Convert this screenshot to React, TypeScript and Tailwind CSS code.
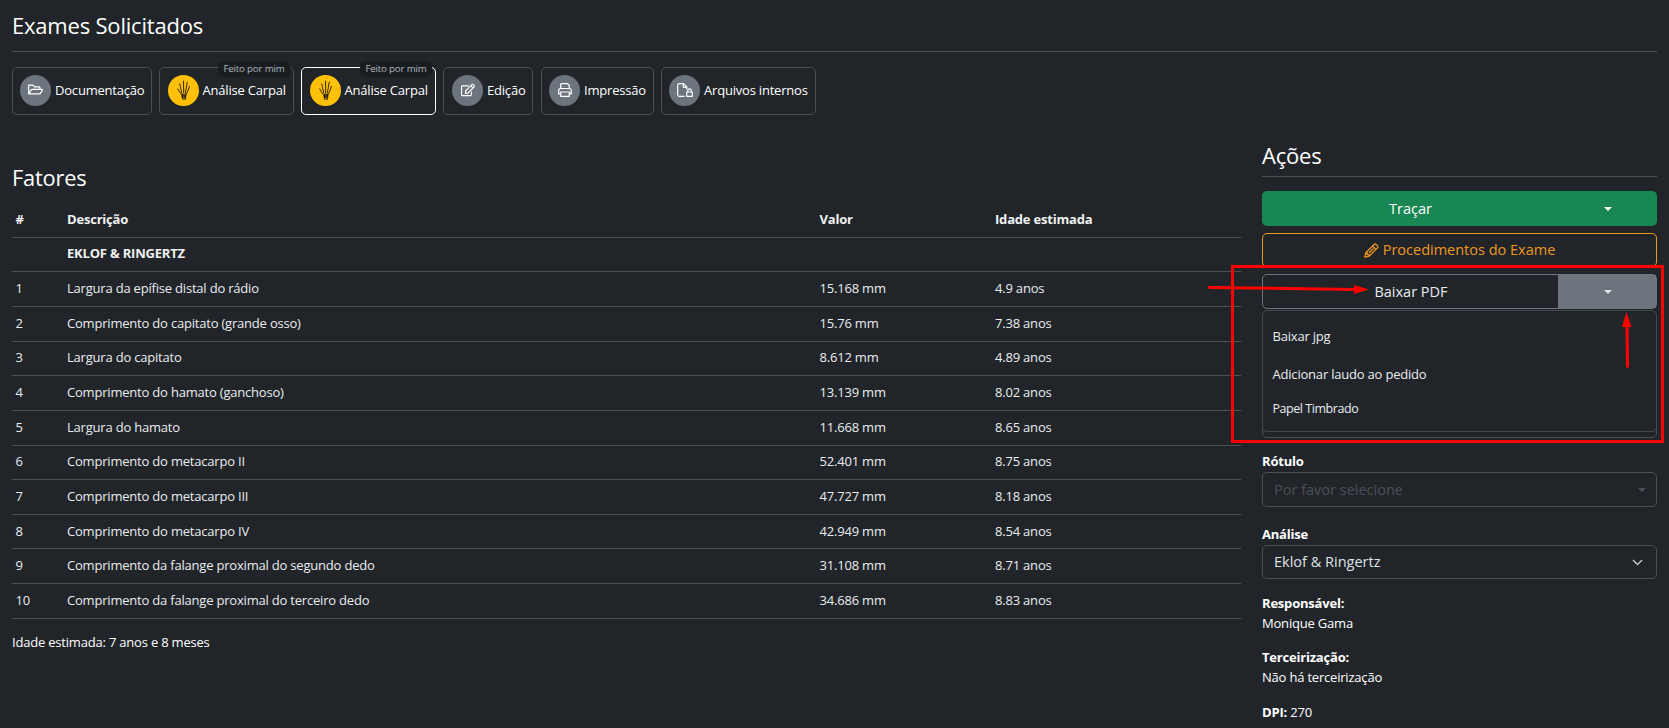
import { FC, ReactNode } from "react";
import { FaRegFolderOpen, FaRegEdit } from "react-icons/fa";
import { BsChevronDown } from "react-icons/bs";

const fatores = [
  ["1", "Largura da epífise distal do rádio", "15.168 mm", "4.9 anos"],
  ["2", "Comprimento do capitato (grande osso)", "15.76 mm", "7.38 anos"],
  ["3", "Largura do capitato", "8.612 mm", "4.89 anos"],
  ["4", "Comprimento do hamato (ganchoso)", "13.139 mm", "8.02 anos"],
  ["5", "Largura do hamato", "11.668 mm", "8.65 anos"],
  ["6", "Comprimento do metacarpo II", "52.401 mm", "8.75 anos"],
  ["7", "Comprimento do metacarpo III", "47.727 mm", "8.18 anos"],
  ["8", "Comprimento do metacarpo IV", "42.949 mm", "8.54 anos"],
  ["9", "Comprimento da falange proximal do segundo dedo", "31.108 mm", "8.71 anos"],
  ["10", "Comprimento da falange proximal do terceiro dedo", "34.686 mm", "8.83 anos"],
];

const HandBones: FC = () => (
  <svg className="-mt-[2px]" width="13" height="20" viewBox="0 0 13 20" fill="none" stroke="#1d1708" strokeWidth="0.9">
    <path d="M.6 8.500 2 11l2.200 3.400M2.600 3.500l1 4.200L5 13.600M6.500.8l.1 6.200.1 6.500M10.300 1.800 9.300 7.500 8.200 13.600M12.500 6l-1.300 4-1.900 4.200" />
    <path d="M4.400 15h5M4.600 17h4.600" strokeWidth="1.800" strokeDasharray="1.500 .3" />
    <path d="M5.200 19h1.400M7.400 19h1.600" strokeWidth="1.600" />
  </svg>
);

const PrinterIcon: FC = () => (
  <svg className="-mt-px" width="14" height="14" viewBox="0 0 14 14" fill="none" stroke="currentColor" strokeWidth="1.200" strokeLinejoin="round">
    <path d="M2.700 5.500V1.700q0-1 1-1h5.800l1.800 1.800v3M2.700 10.800h-2V7.500q0-2 2-2h8.600q2 0 2 2v3.300h-2" />
    <path d="M2.700 9h8.600v4.300H2.700z" />
  </svg>
);

const FileLockIcon: FC = () => (
  <svg className="-mt-px" width="16" height="14" viewBox="0 0 16 14" fill="none" stroke="currentColor" strokeWidth="1.200" strokeLinejoin="round">
    <path d="M7.500 13.300H2.200q-1.500 0-1.500-1.500V2.200Q.7.700 2.200.7h4.300L9.800 4v2.500M6.300.9v3.400h3.400" />
    <path d="M10.800 9V7.500a1.700 1.700 0 0 1 3.400 0V9M9.700 9h5.600v4.300H9.700z" />
  </svg>
);

const PencilIcon: FC = () => (
  <svg width="15" height="15" viewBox="0 0 15 15" fill="none" stroke="currentColor" strokeWidth="1.300" strokeLinejoin="round">
    <path d="m.8 14.200 1-4.400 8.300-8.300q1-1 2 0l1.400 1.400q1 1 0 2L5.200 13.200zM8.600 3l3.400 3.400M1.800 9.800l1.500.3v1.600h1.600l.3 1.500M5 10l4.500-4.500" />
  </svg>
);

const Caret: FC<{ className?: string }> = ({ className = "" }) => (
  <span className={`inline-block border-x-4 border-t-4 border-x-transparent ${className}`} />
);

type ExameProps = {
  icon: ReactNode;
  label: string;
  className: string;
  carpal?: boolean;
  active?: boolean;
};

const Exame: FC<ExameProps> = ({ icon, label, className, carpal, active }) => (
  <button className={`relative flex h-12 items-center gap-1 rounded-[5px] border pb-px whitespace-nowrap ${className} ${active ? "border-white" : "border-[#495057]"}`}>
    {carpal && (
      <span className="absolute -top-[7px] right-[3px] flex h-4 w-[72px] items-center justify-center rounded-[5px] bg-[#1a1d20] text-[9.75px] text-[#adb5bd]">
        Feito por mim
      </span>
    )}
    <span className={`flex size-[31px] shrink-0 items-center justify-center rounded-full ${carpal ? "bg-[#ffc107]" : "bg-[#6c757d]"}`}>{icon}</span>
    <span>{label}</span>
  </button>
);

const App: FC = () => {
  return (
    <div className="relative h-[728px] overflow-hidden bg-[#212529] px-3 font-['Open_Sans',sans-serif] text-[13px] tracking-[-0.2px] text-white">
      <h1 className="flex h-[52px] items-center border-b border-[#4d5154] text-[22px]">Exames Solicitados</h1>
      <div className="mt-[15px] flex gap-[7px]">
        <Exame className="w-[140px] pl-[7px]" label="Documentação" icon={<FaRegFolderOpen size={15} className="-mt-[2px]" />} />
        <Exame className="w-[135px] pl-[7.500px]" label="Análise Carpal" icon={<HandBones />} carpal />
        <Exame className="w-[135px] pl-[7.500px]" label="Análise Carpal" icon={<HandBones />} carpal active />
        <Exame className="mr-px w-[90px] pl-2" label="Edição" icon={<FaRegEdit size={14} className="-mt-[2px]" />} />
        <Exame className="w-[113px] pl-[7px]" label="Impressão" icon={<PrinterIcon />} />
        <Exame className="w-[155px] pl-[7px]" label="Arquivos internos" icon={<FileLockIcon />} />
      </div>

      <div className="flex justify-between">
        <main className="w-[1229px] pt-[46px]">
          <h2 className="flex h-[34px] items-center text-[21.8px]">Fatores</h2>
          <div className="mt-2 flex h-[34.8px] items-center border-b border-[#4d5154] pl-[3.500px] font-bold text-[#f0f1f2]">
            <span className="w-[51.500px]">#</span>
            <span className="w-[752.500px]">Descrição</span>
            <span className="w-[175.500px]">Valor</span>
            <span>Idade estimada</span>
          </div>
          <div className="flex h-[34.63px] items-center border-b border-[#4d5154] pb-px pl-[55px] font-bold text-[#f0f1f2]">EKLOF &amp; RINGERTZ</div>
          {fatores.map(([n, descricao, valor, idade]) => (
            <div key={n} className="flex h-[34.63px] items-center border-b border-[#4d5154] pb-[0.500px] pl-[3.500px] text-[#e9ecef]">
              <span className="w-[51.500px]">{n}</span>
              <span className="w-[752.500px]">{descricao}</span>
              <span className="w-[175.500px]">{valor}</span>
              <span>{idade}</span>
            </div>
          ))}
          <p className="mt-[13px] leading-5">Idade estimada: 7 anos e 8 meses</p>
        </main>

        <aside className="w-[395px] pt-[25px]">
          <h2 className="flex h-[37px] items-center border-b border-[#4d5154] pb-[5px] text-[22px]">Ações</h2>
          <div className="mt-[14px] flex h-[35px] rounded-[5px] bg-[#198754] text-[14.6px] tracking-normal">
            <button className="w-[297px]">Traçar</button>
            <button className="flex flex-1 items-center justify-center"><Caret className="border-t-white" /></button>
          </div>
          <button className="mt-[7px] flex h-[34px] w-full items-center justify-center gap-1 rounded-[5px] border border-[#ed9720] text-[14.5px] tracking-normal text-[#ed9720]">
            <PencilIcon />
            Procedimentos do Exame
          </button>
          <div className="relative mt-[7px] flex h-[35px] rounded-[5px] border border-[#6c757d] text-[14.5px] tracking-normal text-[#e9ecef]">
            <button className="w-[295px] pl-px">Baixar PDF</button>
            <button className="flex flex-1 items-center justify-center bg-[#6c757d] pl-[2px]"><Caret className="border-t-[#dee2e6]" /></button>
            <div className="absolute top-[35px] -left-px z-10 flex h-[122px] w-[395px] flex-col rounded-[5px] border border-[#43484d] bg-[#212529] pt-[15px] pl-[9.500px] text-[13px] tracking-[-0.2px]">
              <span className="leading-5">Baixar jpg</span>
              <span className="mt-[18px] leading-5">Adicionar laudo ao pedido</span>
              <span className="mt-[15px] text-[12.5px] leading-5 tracking-[-0.45px]">Papel Timbrado</span>
            </div>
          </div>
          <div className="mt-[60px] h-[69px] rounded-[5px] border border-[#495057]" />

          <div className="mt-[13px] mb-px leading-5 font-bold">Rótulo</div>
          <div className="flex h-[35px] items-center justify-between rounded-[5px] border border-[#495057] pr-[10px] pl-[11px] text-[14.5px] tracking-normal text-[#495057]">
            Por favor selecione
            <Caret className="border-t-[#495057]" />
          </div>
          <div className="mt-[17px] mb-px leading-5 font-bold">Análise</div>
          <div className="flex h-[34px] items-center justify-between rounded-[5px] border border-[#495057] pr-[13px] pl-[11px] text-[14.5px] tracking-normal text-[#dee2e6]">
            Eklof &amp; Ringertz
            <BsChevronDown size={11} strokeWidth={1} />
          </div>
          <p className="mt-[14px] leading-5"><b>Responsável:</b><br />Monique Gama</p>
          <p className="mt-[14px] leading-5"><b>Terceirização:</b><br />Não há terceirização</p>
          <p className="mt-[15px] leading-5"><b>DPI:</b> 270</p>
        </aside>
      </div>

      {/* red callouts over the download menu */}
      <svg className="pointer-events-none absolute inset-0 z-20" width="1669" height="728" fill="none" stroke="#f00" strokeWidth="3">
        <rect x="1232.5" y="266.5" width="430" height="175" />
        <path d="M1209.500 287.500 1356 289.500M1627.500 366.500 1627 325" strokeLinecap="round" />
        <path d="M1354 285v9l15-4.500zM1622 327h9.500l-5-15z" fill="#f00" stroke="none" />
      </svg>
    </div>
  );
};

export default App;
